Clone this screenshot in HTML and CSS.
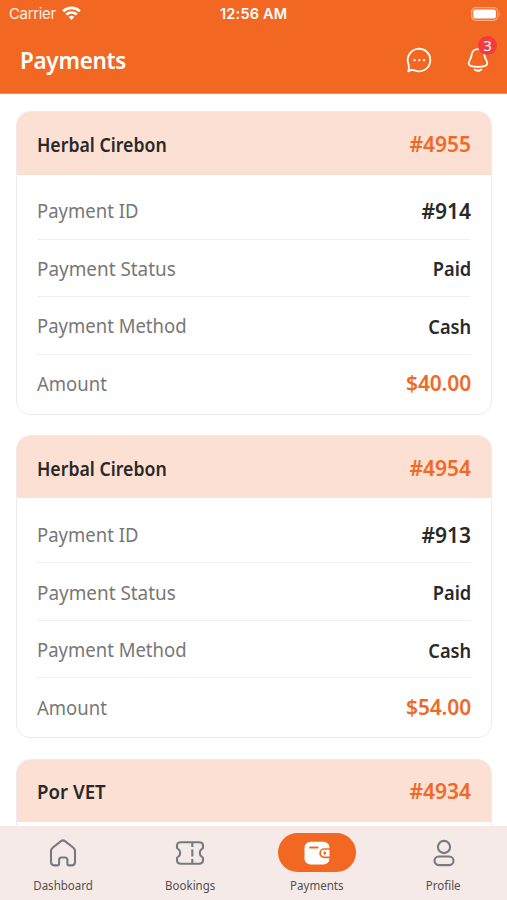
FILE: index.html
```html
<!DOCTYPE html>
<html lang="en">
<head>
<meta charset="utf-8">
<title>Payments</title>
<link rel="stylesheet" href="styles.css">
</head>
<body>
<div class="app">
  <header class="header">
    <div class="status">
      <div class="carrier"><span>Carrier</span>
        <svg width="19" height="15" viewBox="0 0 19 15" fill="none" stroke="#fff" stroke-width="2.7"><path d="M1.2 5.2C6 .7 13 .7 17.8 5.2"/><path d="M4.2 8.6C7.4 5.8 11.6 5.8 14.8 8.6"/><path d="M6.7 10.8Q9.5 8.7 12.3 10.8L9.5 14Z" fill="#fff" stroke="none"/></svg>
      </div>
      <div class="clock">12:56 AM</div>
      <div class="battery"><svg width="32" height="16" viewBox="0 0 32 16"><rect x="1.7" y="1.7" width="26" height="12.6" rx="4" fill="none" stroke="#f9ae83" stroke-width="1.3"/><rect x="3.3" y="3.4" width="22.6" height="9.2" rx="2.2" fill="#fff"/><path d="M29.3 5.8Q31.2 8 29.3 10.2Z" fill="#f9ae83"/></svg></div>
    </div>
    <div class="titlebar">
      <h1>Payments</h1>
      <div class="actions">
        <svg width="26" height="26" viewBox="0 0 26 26" fill="none" stroke="#fff" stroke-width="1.8" stroke-linejoin="round"><path d="M2.3 24.2Q3.2 22 2.6 17.5A11.3 11.3 0 1 1 8.2 23.3Q5.1 22.4 2.3 24.2Z"/><g fill="#fff" stroke="none"><circle cx="8.6" cy="13.2" r="1.15"/><circle cx="13.3" cy="13.2" r="1.15"/><circle cx="18" cy="13.2" r="1.15"/></g></svg>
        <div class="bell">
          <svg width="22" height="26" viewBox="0 0 22 26" fill="none" stroke="#fff" stroke-width="1.8" stroke-linecap="round" stroke-linejoin="round"><path d="M11 2.2C7.2 2.2 4.7 4.8 4.5 8.4C4.3 12.1 1.7 13.2 1.7 16.3C1.7 19.2 5.1 19.9 11 19.9S20.3 19.2 20.3 16.3C20.3 13.2 17.7 12.1 17.5 8.4C17.3 4.8 14.8 2.2 11 2.2Z"/><path d="M7.7 22.5Q11 25.1 14.3 22.5"/></svg>
          <span class="badge">3</span>
        </div>
      </div>
    </div>
  </header>
  <main class="list">
    <section class="card">
      <div class="head"><span class="name">Herbal Cirebon</span><span class="num">#4955</span></div>
      <div class="rows">
        <div class="row"><span>Payment ID</span><b class="wide">#914</b></div>
        <div class="row"><span class="status-label">Payment Status</span><b>Paid</b></div>
        <div class="row"><span>Payment Method</span><b>Cash</b></div>
        <div class="row"><span>Amount</span><b class="price">$40.00</b></div>
      </div>
    </section>
    <section class="card">
      <div class="head"><span class="name">Herbal Cirebon</span><span class="num">#4954</span></div>
      <div class="rows">
        <div class="row"><span>Payment ID</span><b class="wide">#913</b></div>
        <div class="row"><span class="status-label">Payment Status</span><b>Paid</b></div>
        <div class="row"><span>Payment Method</span><b>Cash</b></div>
        <div class="row"><span>Amount</span><b class="price">$54.00</b></div>
      </div>
    </section>
    <section class="card">
      <div class="head"><span class="name short">Por VET</span><span class="num">#4934</span></div>
      <div class="rows"></div>
    </section>
  </main>
  <nav class="tabs">
    <div class="tab"><div class="icon"><svg width="28" height="28" viewBox="0 0 28 28" fill="none" stroke="#747b80" stroke-width="2.1" stroke-linejoin="round"><path d="M2 12Q2 10 3.6 8.8L12 2.1Q14 .6 16 2.1L24.4 8.8Q26 10 26 12V23Q26 26.4 22.6 26.4H20Q18.4 26.4 18.4 24.7V21Q18.4 18.5 16 18.5H12.5Q10.1 18.5 10.1 21V24.7Q10.1 26.4 8.3 26.4H5.4Q2 26.4 2 23Z"/></svg></div><span>Dashboard</span></div>
    <div class="tab"><div class="icon"><svg width="30" height="26" viewBox="0 0 30 26" fill="none" stroke="#747b80" stroke-width="2.1" stroke-linejoin="round"><path d="M6 2.3H24Q28 2.3 28 5.6V7.4Q28 8.4 27 8.9Q24.8 10.2 24.8 12.9T27 16.9Q28 17.4 28 18.4V20.3Q28 23.7 24 23.7H6Q2 23.7 2 20.3V18.4Q2 17.4 3 16.9Q5.2 15.6 5.2 12.9T3 8.9Q2 8.4 2 7.4V5.6Q2 2.3 6 2.3Z"/><path d="M17.3 2.3V7M17.3 9.5V16.5M17.3 19V23.7"/></svg></div><span>Bookings</span></div>
    <div class="tab active"><div class="icon"><svg width="28" height="26" viewBox="0 0 28 26"><rect x="1.5" y="1.8" width="25" height="22.7" rx="6" fill="#fff"/><path d="M7 7.5H14.7" stroke="#f26822" stroke-width="1.8" stroke-linecap="round"/><path d="M28 9H21.3A4.2 4.2 0 0 0 21.3 17.4H28" fill="#fff" stroke="#f26822" stroke-width="1.7"/><path d="M26.5 8H28V18.4H26.5Z" fill="#f26822"/><rect x="20.7" y="11.5" width="2.2" height="3.2" rx=".7" fill="#f26822"/></svg></div><span>Payments</span></div>
    <div class="tab"><div class="icon"><svg width="24" height="28" viewBox="0 0 24 28" fill="none" stroke="#747b80" stroke-width="2.1"><circle cx="12" cy="8" r="6.1"/><rect x="2.5" y="17.5" width="19" height="8.6" rx="4.3"/></svg></div><span>Profile</span></div>
  </nav>
</div>
</body>
</html>
```
FILE: styles.css
```css
* { box-sizing: border-box; }
body { margin: 0; background: #fff; font-family: "Noto Sans", sans-serif; color: #292929; }
.app { width: 507px; height: 900px; display: flex; flex-direction: column; overflow: hidden; }
.header { height: 94px; flex: none; background: #f26822; border-bottom: 1px solid #f48b55; color: #fff; }
.status { height: 27px; padding: 0 5px 0 9px; display: grid; grid-template-columns: 211px auto 1fr; align-items: center; font: 15px/27px Inter, sans-serif; }
.carrier { display: flex; align-items: center; gap: 6px; letter-spacing: -.35px; }
.carrier span { opacity: .9; }
.clock { font-size: 14.5px; font-weight: 600; letter-spacing: .2px; }
.battery { display: flex; justify-content: flex-end; }
.titlebar { height: 65px; padding: 0 18px 0 20px; display: flex; align-items: center; justify-content: space-between; }
h1 { margin: 0; font-size: 24px; font-weight: 600; transform: scaleX(.935); transform-origin: left; letter-spacing: -.3px; }
.actions { display: flex; align-items: center; gap: 35px; }
.bell { position: relative; height: 26px; }
.badge { position: absolute; left: 11px; top: -11px; width: 19px; height: 19px; border-radius: 50%; background: #f13b3e; font-size: 15px; line-height: 19px; text-align: center; }
.list { flex: 1; min-height: 0; overflow: hidden; padding: 17px 15px 0 16px; display: flex; flex-direction: column; gap: 20.25px; }
.card { flex: none; height: 303.5px; border: 1px solid #ececec; border-radius: 14px; overflow: hidden; }
.head { height: 62.5px; background: #fce0d3; padding: 1px 20px 0 19.5px; display: flex; align-items: center; justify-content: space-between; font-size: 20.5px; }
.name { font-weight: 600; transform: scaleX(.863); transform-origin: left; }
.name.short { transform: scaleX(.91); }
.num { color: #ef6a27; font-weight: 600; font-size: 21px; }
.rows { padding: 7.5px 20px 0; }
.row { height: 57.5px; padding-top: 1px; border-bottom: 1px solid #f0f0f0; display: flex; align-items: center; justify-content: space-between; font-size: 20px; color: #777; }
.row:last-child { border-bottom: 0; padding-top: 0; }
.row span { margin-left: -.5px; transform: scaleX(.925); transform-origin: left; }
.row .status-label { transform: scaleX(.945); }
.row b { font-weight: 600; font-size: 20.5px; color: #292929; transform: scaleX(.89); transform-origin: right; }
.row .wide { transform: none; font-size: 21px; }
.row .price { color: #ef6a27; transform: none; font-size: 21px; letter-spacing: -.15px; }
.tabs { height: 74px; flex: none; background: #f5eae7; padding: 7px 0 0; display: grid; grid-template-columns: repeat(4, 1fr); }
.tab { display: flex; flex-direction: column; align-items: center; font-size: 12px; line-height: 17px; color: #54504f; gap: 5px; }
.tab span { transform: scaleX(.96); }
.icon { width: 78px; height: 39px; border-radius: 20px; display: flex; align-items: center; justify-content: center; }
.active .icon { background: #f26822; }
```
